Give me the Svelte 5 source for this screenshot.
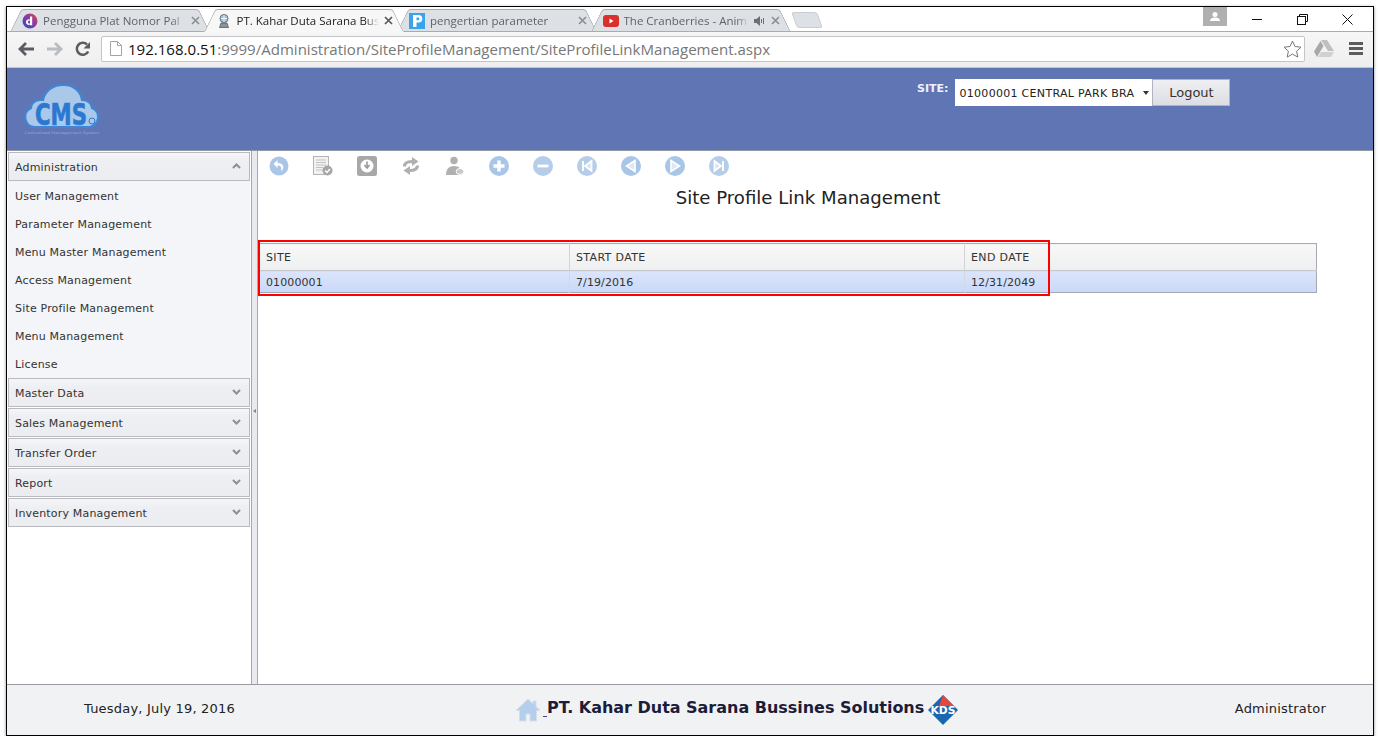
<script>
  const tabs = [
    { title: 'Pengguna Plat Nomor Pal', icon: 'd' },
    { title: 'PT. Kahar Duta Sarana Bus', icon: 'site', active: true },
    { title: 'pengertian parameter', icon: 'p' },
    { title: 'The Cranberries - Anim', icon: 'yt', sound: true }
  ];
  const items = [
    'User Management',
    'Parameter Management',
    'Menu Master Management',
    'Access Management',
    'Site Profile Management',
    'Menu Management',
    'License'
  ];
  const closed = ['Master Data', 'Sales Management', 'Transfer Order', 'Report', 'Inventory Management'];
</script>

<div class="window">
  <div class="tabstrip">
    {#each tabs as tab}
      <div class="tab" class:active={tab.active}>
        <span class="fav">
          {#if tab.icon === 'd'}
            <svg width="16" height="16" viewBox="0 0 16 16">
              <defs>
                <linearGradient id="dg" x1="0" y1="1" x2="1" y2="0">
                  <stop offset="0" stop-color="#2b4fc4" />
                  <stop offset="0.55" stop-color="#8a3aa8" />
                  <stop offset="1" stop-color="#e8483a" />
                </linearGradient>
              </defs>
              <circle cx="8" cy="8" r="7.500" fill="url(#dg)" />
              <path d="M10.200 3.600v8.600H8v-.6a2.800 2.800 0 1 1 0-5V3.600zM7.400 7.600a1.400 1.400 0 1 0 .6 2.600V8a1.400 1.400 0 0 0-.6-.4z" fill="#fff" fill-rule="evenodd" />
            </svg>
          {:else if tab.icon === 'site'}
            <svg width="16" height="16" viewBox="0 0 16 16">
              <circle cx="8" cy="5.500" r="4" fill="#a9c4d6" stroke="#5c7484" />
              <path d="M8 2v7M5 5.500h6" stroke="#e8f0f4" stroke-width="1" />
              <path d="M5 10h6l1.500 4.500h-9z" fill="#8d9499" stroke="#555c60" stroke-width=".8" />
            </svg>
          {:else if tab.icon === 'p'}
            <svg width="16" height="16" viewBox="0 0 16 16">
              <rect width="16" height="16" fill="#3ba3ec" />
              <path d="M4 2h5.500a3.800 3.800 0 0 1 0 7.600H7.500V14H4zM7.500 4.600v2.600h1.600a1.300 1.300 0 0 0 0-2.600z" fill="#fff" fill-rule="evenodd" />
            </svg>
          {:else}
            <svg width="16" height="16" viewBox="0 0 16 16">
              <rect y="2" width="16" height="12" rx="3" fill="#d9302c" />
              <path d="M6.500 5.500l4 2.500-4 2.500z" fill="#fff" />
            </svg>
          {/if}
        </span>
        <span class="tab-title">{tab.title}</span>
        {#if tab.sound}
          <svg class="sound" width="12" height="10" viewBox="0 0 12 10">
            <path d="M0 3h2.500L6 0v10L2.500 7H0z" fill="#6b7076" />
            <path d="M7.500 3v4M9.500 2v6" stroke="#6b7076" />
          </svg>
        {/if}
        <svg class="close" width="9" height="9" viewBox="0 0 9 9">
          <path d="M1 1l7 7M8 1l-7 7" stroke={tab.active ? '#55585c' : '#8b9096'} stroke-width="1.700" />
        </svg>
      </div>
    {/each}
    <div class="newtab"></div>
    <div class="caption">
      <div class="profile">
        <svg width="14" height="12" viewBox="0 0 14 12">
          <circle cx="7" cy="3.500" r="2.500" fill="#fff" />
          <path d="M2 10c0-2.500 2.500-3.500 5-3.500s5 1 5 3.500z" fill="#fff" />
        </svg>
      </div>
      <div class="winbtn">
        <svg width="11" height="11" viewBox="0 0 11 11"><path d="M0 5.500h10" stroke="#111" /></svg>
      </div>
      <div class="winbtn">
        <svg width="11" height="11" viewBox="0 0 11 11">
          <path d="M2.500 2.500V.5h8v7h-2" fill="none" stroke="#111" />
          <rect x=".5" y="2.500" width="8" height="8" fill="none" stroke="#111" />
        </svg>
      </div>
      <div class="winbtn">
        <svg width="11" height="11" viewBox="0 0 11 11"><path d="M.5.500l10 10M10.500.500l-10 10" stroke="#111" /></svg>
      </div>
    </div>
  </div>

  <div class="toolbar">
    <svg class="nav" width="18" height="16" viewBox="0 0 18 16">
      <path d="M17 8H4M9 2L3 8l6 6" fill="none" stroke="#5a5d60" stroke-width="2.800" />
    </svg>
    <svg class="nav" width="18" height="16" viewBox="0 0 18 16">
      <path d="M1 8h13M9 2l6 6-6 6" fill="none" stroke="#b9bcc0" stroke-width="2.800" />
    </svg>
    <svg class="nav" width="16" height="16" viewBox="0 0 16 16">
      <path d="M13.200 10.500A6 6 0 1 1 12 3.500" fill="none" stroke="#5a5d60" stroke-width="2.500" />
      <path d="M15 1v6.500H8.500z" fill="#5a5d60" />
    </svg>
    <div class="omnibox">
      <svg width="12" height="15" viewBox="0 0 12 15">
        <path d="M.5.500h7l4 4v10H.5z" fill="#fff" stroke="#a2a5a8" />
        <path d="M7.500.500v4h4" fill="none" stroke="#a2a5a8" />
      </svg>
      <span class="url"><span class="host">192.168.0.51</span>:9999/Administration/SiteProfileManagement/SiteProfileLinkManagement.aspx</span>
      <svg class="star" width="19" height="18" viewBox="0 0 19 18">
        <path d="M9.500 1l2.500 5.500 6 .7-4.400 4 1.200 5.900-5.300-3-5.300 3 1.200-5.900-4.400-4 6-.7z" fill="#fff" stroke="#75787c" />
      </svg>
    </div>
    <svg class="drive" width="20" height="17" viewBox="0 0 20 17">
      <path d="M7 0h6l7 11h-6z" fill="#bdbfc1" />
      <path d="M6.500 1L0 11.500 3 17l6.500-11z" fill="#a6a8aa" />
      <path d="M7 12h13l-3 5H4z" fill="#cfd0d2" />
    </svg>
    <div class="menu"><span></span><span></span><span></span></div>
  </div>

  <header class="apphead">
    <div class="logo">
      <svg width="80" height="56" viewBox="0 0 80 56">
        <path d="M12 47A10 10 0 0 1 9 28C9 22 16 19 21 20 23 10 33 4 42 5 52 5 59 12 60 20 66 20 70 24 70 28A10 10 0 0 1 68 47z" fill="#a9c8ea" stroke="#3f86d6" stroke-width="2.200" />
        <text x="39" y="45" text-anchor="middle" class="logo-text" textLength="52" lengthAdjust="spacingAndGlyphs">CMS</text>
        <circle cx="70" cy="41" r="3" fill="none" stroke="#2f79cf" />
        <text x="40" y="54" text-anchor="middle" class="logo-sub" textLength="75" lengthAdjust="spacingAndGlyphs">Centralized Management System</text>
      </svg>
    </div>
    <div class="site-pick">
      <span class="site-label">SITE:</span>
      <div class="select">
        <span class="select-val">01000001 CENTRAL PARK BRA</span>
        <i class="caret"></i>
      </div>
      <div class="logout">Logout</div>
    </div>
  </header>

  <div class="main">
    <aside class="side">
      <div class="acc-head">
        <span>Administration</span>
        <svg width="9" height="6" viewBox="0 0 9 6"><path d="M1 5l3.500-3.500L8 5" fill="none" stroke="#8c8f93" stroke-width="2" /></svg>
      </div>
      <ul class="acc-list">
        {#each items as item}
          <li>{item}</li>
        {/each}
      </ul>
      {#each closed as name}
        <div class="acc-head closed">
          <span>{name}</span>
          <svg width="9" height="6" viewBox="0 0 9 6"><path d="M1 1l3.500 3.500L8 1" fill="none" stroke="#8c8f93" stroke-width="2" /></svg>
        </div>
      {/each}
    </aside>
    <div class="split"><i></i></div>

    <main class="content">
      <div class="tools">
        <svg width="20" height="20" viewBox="0 0 20 20">
          <circle cx="10" cy="10" r="9.500" fill="#a9c6e8" />
          <path d="M8.500 4L4.500 8l4 4V9.500c3 0 4.500 1.500 3.500 6 3.500-3 3.500-8.500-3.500-8.500z" fill="#fff" />
        </svg>
        <svg width="20" height="20" viewBox="1 0 20 20">
          <rect x="1.500" y=".5" width="15" height="18" fill="#f2f2f2" stroke="#b4b4b4" />
          <path d="M4 4h10M4 6.500h10M4 9h10M4 11.500h7M4 14h6" stroke="#c2c2c2" />
          <circle cx="15.500" cy="14.500" r="5" fill="#a6a6a6" />
          <path d="M13 14.500l2 2 3-3.500" fill="none" stroke="#fff" stroke-width="1.400" />
        </svg>
        <svg width="20" height="20" viewBox="0 0 20 20">
          <rect width="20" height="20" rx="2.500" fill="#a8a8a8" />
          <circle cx="10" cy="10" r="6.500" fill="#fff" />
          <path d="M10 5.500v6M7.500 9l2.500 3 2.500-3" fill="none" stroke="#9a9a9a" stroke-width="1.600" />
        </svg>
        <svg width="20" height="20" viewBox="-1 0 20 20">
          <path d="M2.500 10.500C2.500 7 5 5.500 10 5.500" fill="none" stroke="#b0b0b0" stroke-width="3.200" />
          <path d="M10 1l6.500 4.500L10 10z" fill="#b0b0b0" />
          <path d="M15.500 9.500c0 3.500-2.500 5-7.500 5" fill="none" stroke="#b0b0b0" stroke-width="3.200" />
          <path d="M8 10L1.500 14.500 8 19z" fill="#b0b0b0" />
        </svg>
        <svg width="20" height="20" viewBox="0 0 20 20">
          <circle cx="9" cy="4.500" r="3.700" fill="#b0b0b0" />
          <path d="M1 19c0-6 3-9 8-9s8 3 8 9z" fill="#b0b0b0" />
          <ellipse cx="15" cy="15.500" rx="3.800" ry="3" fill="#c8c8c8" stroke="#fff" />
        </svg>
        <svg width="20" height="20" viewBox="0 0 20 20">
          <circle cx="10" cy="10" r="10" fill="#a9c6e8" />
          <path d="M10 4.500v11M4.500 10h11" stroke="#fff" stroke-width="3.400" />
        </svg>
        <svg width="20" height="20" viewBox="0 0 20 20">
          <circle cx="10" cy="10" r="10" fill="#b5cde9" />
          <path d="M4.500 10h11" stroke="#fff" stroke-width="2.800" />
        </svg>
        <svg width="20" height="20" viewBox="0 0 20 20">
          <circle cx="10" cy="10" r="10" fill="#b5cde9" />
          <path d="M6 5v10" stroke="#fff" stroke-width="2" />
          <path d="M14.500 5L8 10l6.500 5z" fill="#d6e4f5" stroke="#fff" stroke-width="1.800" />
        </svg>
        <svg width="20" height="20" viewBox="0 0 20 20">
          <circle cx="10" cy="10" r="10" fill="#a9c6e8" />
          <path d="M14 4.500v11L5.500 10z" fill="#dce8f6" stroke="#fff" stroke-width="1.600" />
        </svg>
        <svg width="20" height="20" viewBox="0 0 20 20">
          <circle cx="10" cy="10" r="10" fill="#a9c6e8" />
          <path d="M6 4.500v11L14.500 10z" fill="#dce8f6" stroke="#fff" stroke-width="1.600" />
        </svg>
        <svg width="20" height="20" viewBox="0 0 20 20">
          <circle cx="10" cy="10" r="10" fill="#b5cde9" />
          <path d="M14 5v10" stroke="#fff" stroke-width="2" />
          <path d="M5.500 5L12 10l-6.500 5z" fill="#d6e4f5" stroke="#fff" stroke-width="1.800" />
        </svg>
      </div>

      <h1 class="title">Site Profile Link Management</h1>

      <div class="grid-wrap">
        <table class="grid">
          <thead>
            <tr>
              <th class="c1">SITE</th>
              <th class="c2">START DATE</th>
              <th>END DATE</th>
            </tr>
          </thead>
          <tbody>
            <tr>
              <td>01000001</td>
              <td>7/19/2016</td>
              <td>12/31/2049</td>
            </tr>
          </tbody>
        </table>
        <div class="redbox"></div>
      </div>
    </main>
  </div>

  <footer class="foot">
    <span class="date">Tuesday, July 19, 2016</span>
    <div class="company">
      <svg class="home" width="26" height="24" viewBox="0 0 26 24">
        <path d="M13 1L1 12.500h3.500V23h6.500v-7h4v7h6.500V12.500H25l-4-3.800V3h-3v2.800z" fill="#b4cfee" stroke="#d6dde4" />
      </svg>
      <span class="under"></span>
      <strong>PT. Kahar Duta Sarana Bussines Solutions</strong>
      <svg class="kds" width="30" height="30" viewBox="0 0 30 30">
        <path d="M15 0l15 15-15 15L0 15z" fill="#1b66b0" />
        <path d="M15 0l11 11H11z" fill="#e8443a" />
        <text x="15" y="19" text-anchor="middle" class="kds-text" textLength="25" lengthAdjust="spacingAndGlyphs">KDS</text>
      </svg>
    </div>
    <span class="user">Administrator</span>
  </footer>
</div>

<style>
  :global(body) {
    margin: 0;
    background: #fff;
  }

  .window {
    box-sizing: border-box;
    width: 1368px;
    height: 730px;
    margin: 6px 0 0 6px;
    border: 1px solid #000;
    box-shadow: 0 1px 3px rgba(0, 0, 0, 0.45);
    display: flex;
    flex-direction: column;
    background: #fff;
    overflow: hidden;
    font-family: "DejaVu Sans", Verdana, sans-serif;
  }

  /* browser chrome */
  .tabstrip {
    height: 25px;
    flex: none;
    display: flex;
    align-items: flex-end;
    padding-left: 3px;
    border-bottom: 1px solid #a9abad;
    box-sizing: border-box;
    font-family: "Open Sans", "Noto Sans", sans-serif;
    background: #fff;
  }

  .tab {
    position: relative;
    width: 177.500px;
    height: 23px;
    margin: 0 -7px -1px 0;
    padding: 0 11px 0 12px;
    display: flex;
    align-items: center;
    gap: 5px;
    font-size: 11.500px;
    color: #5f6368;
    z-index: 1;
    flex: none;
  }

  .tab::before,
  .tab::after {
    content: "";
    position: absolute;
    top: 0;
    bottom: 0;
    width: 50%;
    background: #dde1e6;
    border-top: 1px solid #a9abad;
    z-index: -1;
  }

  .tab::before {
    left: 0;
    border-left: 1px solid #a9abad;
    border-bottom: 1px solid #a9abad;
    border-radius: 3px 0 0 0;
    transform: skewX(-26deg);
    transform-origin: bottom left;
  }

  .tab::after {
    right: 0;
    border-right: 1px solid #a9abad;
    border-bottom: 1px solid #a9abad;
    border-radius: 0 3px 0 0;
    transform: skewX(26deg);
    transform-origin: bottom right;
  }

  .tab.active {
    color: #222;
    z-index: 2;
  }

  .tab.active::before,
  .tab.active::after {
    background: #f7f7f8;
    border-bottom-color: #f7f7f8;
  }

  .fav {
    flex: none;
    width: 16px;
    height: 16px;
    display: block;
  }

  .fav svg {
    display: block;
  }

  .tab-title {
    flex: 1;
    min-width: 0;
    white-space: nowrap;
    overflow: hidden;
    -webkit-mask-image: linear-gradient(90deg, #000 90%, transparent);
    mask-image: linear-gradient(90deg, #000 90%, transparent);
  }

  .sound,
  .close {
    flex: none;
  }

  .newtab {
    width: 26px;
    height: 16px;
    margin: 0 0 3px 10px;
    background: #dde1e6;
    border: 1px solid #c9cdd2;
    border-radius: 3px;
    transform: skewX(20deg);
    box-sizing: border-box;
    flex: none;
  }

  .caption {
    margin-left: auto;
    padding-right: 3px;
    align-self: flex-start;
    display: flex;
    align-items: flex-start;
  }

  .profile {
    width: 24px;
    height: 19px;
    margin-right: 8px;
    background: #b0b0b0;
    display: flex;
    justify-content: center;
    align-items: center;
  }

  .winbtn {
    width: 45px;
    height: 24px;
    display: flex;
    justify-content: center;
    align-items: center;
  }

  .winbtn svg {
    display: block;
  }

  .toolbar {
    height: 36px;
    flex: none;
    display: flex;
    align-items: center;
    padding: 0 10px 2px 10px;
    box-sizing: border-box;
    background: linear-gradient(#f6f6f7, #eeeeef);
    border-bottom: 1px solid #c2c3c4;
  }

  .nav {
    flex: none;
    margin-right: 11px;
  }

  .omnibox {
    flex: 1;
    height: 26px;
    margin-left: -1px;
    box-sizing: border-box;
    border: 1px solid #c4c5c7;
    border-radius: 2px;
    background: #fff;
    display: flex;
    align-items: center;
    padding: 0 2px 0 8px;
    gap: 6px;
  }

  .url {
    flex: 1;
    font-family: "Open Sans", "Noto Sans", sans-serif;
    font-size: 15.060px;
    color: #777;
    white-space: nowrap;
  }

  .host {
    color: #111;
  }

  .drive {
    flex: none;
    margin-left: 9px;
  }

  .menu {
    flex: none;
    width: 14px;
    margin-left: 15px;
    display: flex;
    flex-direction: column;
    gap: 2px;
  }

  .menu span {
    height: 3px;
    background: #5a5d60;
  }

  /* app header */
  .apphead {
    height: 83px;
    flex: none;
    display: flex;
    background: #6076b4;
    border-bottom: 1px solid #9398a6;
    box-sizing: border-box;
  }

  .logo {
    width: 910px;
    padding: 12px 0 0 15px;
    box-sizing: border-box;
  }

  .logo svg {
    display: block;
    overflow: visible;
  }

  .logo-text {
    font-family: "DejaVu Sans", sans-serif;
    font-weight: 700;
    font-size: 31px;
    fill: #2b78d0;
    stroke: #2b78d0;
    stroke-width: 0.6;
  }

  .logo-sub {
    font-family: "DejaVu Sans", sans-serif;
    font-size: 3.500px;
    fill: #8fa6d8;
  }

  .site-pick {
    display: flex;
    align-items: flex-start;
    padding-top: 11px;
  }

  .site-label {
    font-size: 11px;
    font-weight: 700;
    color: #eef1f8;
    margin-right: 7px;
    line-height: 20px;
  }

  .select {
    width: 197px;
    height: 27px;
    box-sizing: border-box;
    background: #fff;
    display: flex;
    align-items: center;
    padding: 1px 3px 0 4px;
    font-size: 11px;
    letter-spacing: 0.3px;
    color: #222;
  }

  .select-val {
    flex: 1;
    white-space: nowrap;
    overflow: hidden;
  }

  .caret {
    width: 0;
    height: 0;
    border: 3.500px solid transparent;
    border-top: 4px solid #333;
    border-bottom: 0;
  }

  .logout {
    width: 78px;
    height: 27px;
    box-sizing: border-box;
    border: 1px solid #b0b4c0;
    background: linear-gradient(#eeeff2, #dcdee3);
    display: flex;
    justify-content: center;
    align-items: center;
    font-size: 13px;
    color: #333;
  }

  /* body */
  .main {
    flex: 1;
    min-height: 0;
    display: flex;
  }

  .side {
    width: 244px;
    flex: none;
    box-sizing: border-box;
    padding: 1px 1px 0 1px;
    background: #fff;
    display: flex;
    flex-direction: column;
    align-items: stretch;
  }

  .acc-head {
    height: 29px;
    box-sizing: border-box;
    border: 1px solid #b8bac0;
    background: linear-gradient(#f6f6f8 0%, #eeeff2 30%, #ecedf0 100%);
    display: flex;
    justify-content: space-between;
    align-items: center;
    padding: 2px 8px 0 6px;
    font-size: 11px;
    letter-spacing: 0.18px;
    color: #333;
    flex: none;
  }

  .acc-head svg {
    margin-top: -3px;
  }

  .acc-head.closed {
    margin-top: 1px;
  }

  .acc-list + .acc-head.closed {
    margin-top: -1px;
  }

  .acc-list {
    list-style: none;
    margin: 0;
    padding: 2px 0 0 0;
    background: #f4f5f8;
  }

  .acc-list li {
    height: 28px;
    line-height: 28px;
    padding-left: 7px;
    font-size: 11px;
    letter-spacing: 0.18px;
    color: #333;
  }

  .split {
    width: 7px;
    flex: none;
    box-sizing: border-box;
    background: #e9eaef;
    border-left: 1px solid #a6a8ae;
    border-right: 1px solid #a6a8ae;
    display: flex;
    align-items: center;
    justify-content: center;
    padding-bottom: 14px;
  }

  .split i {
    width: 0;
    height: 0;
    border: 2.500px solid transparent;
    border-right: 3px solid #80848c;
    border-left: 0;
  }

  .content {
    flex: 1;
    min-width: 0;
    display: flex;
    flex-direction: column;
  }

  .tools {
    display: flex;
    align-items: center;
    height: 30px;
    padding-left: 11px;
    gap: 24px;
  }

  .tools svg {
    display: block;
    flex: none;
  }

  .title {
    margin: 5px 0 0 0;
    text-align: center;
    width: 1100px;
    font-size: 18.100px;
    font-weight: 400;
    line-height: 24px;
    color: #222;
  }

  .grid-wrap {
    position: relative;
    margin: 33px 0 0 1px;
    width: 1058px;
  }

  .grid {
    width: 100%;
    table-layout: fixed;
    border-collapse: collapse;
    border: 1px solid #a6a9b4;
    font-size: 11px;
    color: #333;
  }

  .grid th {
    height: 26px;
    padding: 0 6px;
    text-align: left;
    font-weight: 400;
    letter-spacing: 0.35px;
    background: linear-gradient(#f8f8f8, #eeeff0);
    border-right: 1px solid #d2d3d7;
    border-bottom: 1px solid #c8c9ce;
    color: #333;
  }

  .grid th:last-child,
  .grid td:last-child {
    border-right: 0;
  }

  .grid td {
    height: 22px;
    padding: 2px 6px 0;
    box-sizing: border-box;
    letter-spacing: 0.1px;
    background: linear-gradient(#dbe5fb, #c9d9f8);
    border-right: 1px solid #d2d8e6;
  }

  .c1 {
    width: 297px;
  }

  .c2 {
    width: 382px;
  }

  .redbox {
    position: absolute;
    left: -1px;
    top: -3px;
    width: 792px;
    height: 56px;
    box-sizing: border-box;
    border: 2px solid #f00;
  }

  /* footer */
  .foot {
    height: 51px;
    flex: none;
    box-sizing: border-box;
    border-top: 1px solid #9a9ba0;
    background: #f1f2f4;
    display: flex;
    align-items: center;
    padding: 0 47px 0 77px;
    font-size: 13px;
    color: #222;
  }

  .date {
    width: 431px;
    flex: none;
    letter-spacing: 0.2px;
    padding-bottom: 4px;
  }

  .user {
    letter-spacing: 0.2px;
    padding-bottom: 4px;
  }

  .company {
    display: flex;
    align-items: center;
    flex: 1;
  }

  .company strong {
    font-size: 16px;
    letter-spacing: -0.02px;
    color: #1d1d3a;
    white-space: nowrap;
    padding-bottom: 6px;
  }

  .under {
    width: 4px;
    height: 1px;
    background: #44449a;
    margin: 12px 0 0 2px;
  }

  .home,
  .kds {
    display: block;
    flex: none;
  }

  .kds {
    margin-left: 4px;
  }

  .kds-text {
    font-family: "DejaVu Sans", sans-serif;
    font-weight: 700;
    font-size: 10px;
    fill: #fff;
  }
</style>
